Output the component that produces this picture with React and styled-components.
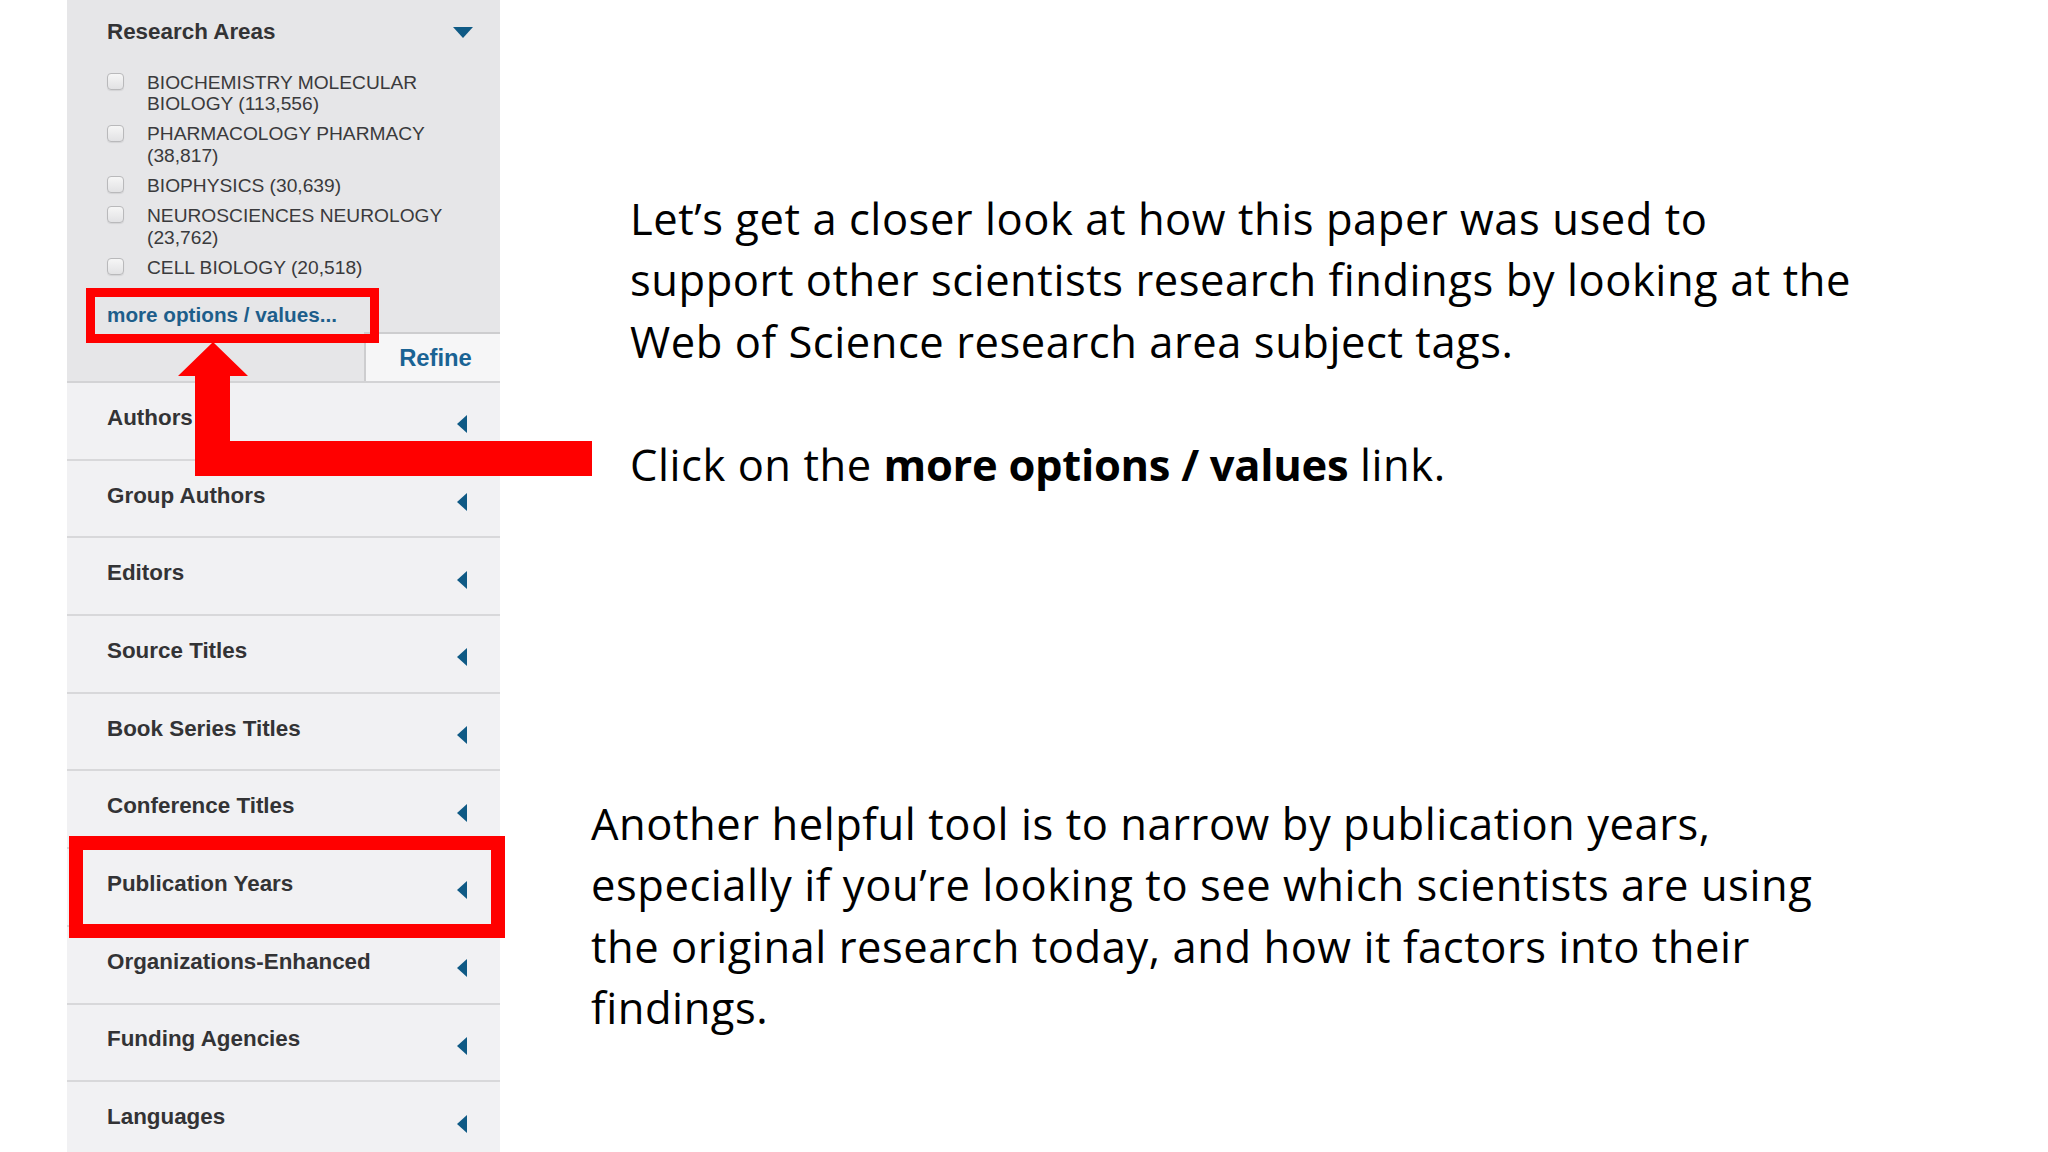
import React from "react";
import styled, { createGlobalStyle } from "styled-components";

const GlobalStyle = createGlobalStyle`
  html, body {
    margin: 0;
    padding: 0;
    background: #ffffff;
  }
  body {
    width: 2048px;
    height: 1152px;
    overflow: hidden;
    font-family: "Liberation Sans", Arial, sans-serif;
  }
`;

const Page = styled.div`
  position: relative;
  width: 2048px;
  height: 1152px;
  display: flex;
  flex-direction: row;
  background: #ffffff;
  overflow: hidden;
`;

const Sidebar = styled.aside`
  margin-left: 67px;
  width: 433px;
  height: 100%;
  display: flex;
  flex-direction: column;
  background: #f1f1f3;
  font-family: "Liberation Sans", Arial, sans-serif;
  flex-shrink: 0;
`;

const ResearchSection = styled.section`
  box-sizing: border-box;
  flex-shrink: 0;
  height: 383px;
  background: #e6e6e8;
  border-bottom: 2px solid #d3d3d5;
  padding: 19px 0 0 40px;
  display: flex;
  flex-direction: column;
`;

const SectionHeader = styled.div`
  display: flex;
  align-items: center;
  justify-content: space-between;
  padding-right: 27px;
  height: 26px;
`;

const HeaderTitle = styled.h3`
  margin: 0;
  font-size: 22.4px;
  line-height: 26px;
  font-weight: 700;
  color: #333335;
`;

const DownCaret = styled.span`
  width: 0;
  height: 0;
  border-left: 10.5px solid transparent;
  border-right: 10.5px solid transparent;
  border-top: 11px solid #0f5a85;
`;

const OptionList = styled.ul`
  list-style: none;
  margin: 26.5px 0 0 0;
  padding: 0;
  display: flex;
  flex-direction: column;
  gap: 8.3px;
`;

const OptionItem = styled.li`
  display: flex;
  align-items: flex-start;
`;

const Checkbox = styled.span`
  box-sizing: border-box;
  flex-shrink: 0;
  width: 17px;
  height: 17px;
  margin-top: 1.5px;
  border: 1px solid #b9b9bb;
  border-radius: 4px;
  background: linear-gradient(#f6f6f6, #e2e2e4);
  box-shadow: 0 1px 1px rgba(0, 0, 0, 0.08);
`;

const OptionLabel = styled.span`
  margin-left: 23px;
  max-width: 316px;
  font-size: 19.2px;
  line-height: 21.7px;
  color: #3a3a3c;
`;

const MoreLink = styled.a`
  margin-top: 24.6px;
  font-size: 20.7px;
  line-height: 24px;
  font-weight: 700;
  color: #1d5e8b;
  text-decoration: none;
  align-self: flex-start;
`;

const RefineRow = styled.div`
  margin-top: auto;
  display: flex;
  justify-content: flex-end;
`;

const RefineButton = styled.button`
  box-sizing: border-box;
  width: 136px;
  height: 49px;
  margin: 0;
  padding: 0 0 0 5px;
  border: none;
  border-top: 2px solid #cdcdcf;
  border-left: 2px solid #cdcdcf;
  background: #f6f6f7;
  font-family: "Liberation Sans", Arial, sans-serif;
  font-size: 23.8px;
  line-height: 45px;
  font-weight: 700;
  color: #1a6394;
  text-align: center;
`;

const FilterRow = styled.div`
  box-sizing: border-box;
  flex-shrink: 0;
  height: 77.7px;
  border-bottom: 2px solid #d8d8da;
  padding: 0 33px 6px 40px;
  display: flex;
  align-items: center;
  justify-content: space-between;
`;

const FilterTitle = styled.span`
  font-size: 22.4px;
  line-height: 26px;
  font-weight: 700;
  color: #333335;
`;

const LeftCaret = styled.span`
  width: 0;
  height: 0;
  margin-top: 13px;
  border-top: 9px solid transparent;
  border-bottom: 9px solid transparent;
  border-right: 10.5px solid #0f5a85;
`;

const Content = styled.main`
  flex: 1;
  display: flex;
  flex-direction: column;
  padding: 187.6px 0 0 91px;
  font-family: "Open Sans", Lato, sans-serif;
  color: #000000;
`;

const Paragraph = styled.p`
  margin: 0;
  margin-left: ${(p) => p.$indent || 0}px;
  margin-top: ${(p) => p.$top || 0}px;
  font-size: 43.5px;
  line-height: 61.6px;
  letter-spacing: 0.55px;
  white-space: nowrap;
`;

const Strong = styled.strong`
  font-weight: 700;
  letter-spacing: -0.3px;
`;

const HighlightBox = styled.div`
  position: absolute;
  box-sizing: border-box;
  left: ${(p) => p.$x}px;
  top: ${(p) => p.$y}px;
  width: ${(p) => p.$w}px;
  height: ${(p) => p.$h}px;
  border: ${(p) => p.$t}px solid #ff0000;
  pointer-events: none;
`;

const ArrowSvg = styled.svg`
  position: absolute;
  left: 170px;
  top: 336px;
  width: 430px;
  height: 145px;
  pointer-events: none;
`;

const options = [
  "BIOCHEMISTRY MOLECULAR BIOLOGY (113,556)",
  "PHARMACOLOGY PHARMACY (38,817)",
  "BIOPHYSICS (30,639)",
  "NEUROSCIENCES NEUROLOGY (23,762)",
  "CELL BIOLOGY (20,518)",
];

const filters = [
  "Authors",
  "Group Authors",
  "Editors",
  "Source Titles",
  "Book Series Titles",
  "Conference Titles",
  "Publication Years",
  "Organizations-Enhanced",
  "Funding Agencies",
  "Languages",
];

export default function App() {
  return (
    <>
      <GlobalStyle />
      <Page>
        <Sidebar>
          <ResearchSection>
            <SectionHeader>
              <HeaderTitle>Research Areas</HeaderTitle>
              <DownCaret />
            </SectionHeader>
            <OptionList>
              {options.map((o) => (
                <OptionItem key={o}>
                  <Checkbox />
                  <OptionLabel>{o}</OptionLabel>
                </OptionItem>
              ))}
            </OptionList>
            <MoreLink href="#">more options / values...</MoreLink>
            <RefineRow>
              <RefineButton>Refine</RefineButton>
            </RefineRow>
          </ResearchSection>
          {filters.map((f) => (
            <FilterRow key={f}>
              <FilterTitle>{f}</FilterTitle>
              <LeftCaret />
            </FilterRow>
          ))}
        </Sidebar>
        <Content>
          <Paragraph $indent={39}>
            Let’s get a closer look at how this paper was used to
            <br />
            support other scientists research findings by looking at the
            <br />
            Web of Science research area subject tags.
          </Paragraph>
          <Paragraph $indent={39} $top={61.6}>
            Click on the <Strong>more options / values</Strong> link.
          </Paragraph>
          <Paragraph $top={297}>
            Another helpful tool is to narrow by publication years,
            <br />
            especially if you’re looking to see which scientists are using
            <br />
            the original research today, and how it factors into their
            <br />
            findings.
          </Paragraph>
        </Content>

        <HighlightBox $x={86} $y={288} $w={293} $h={55} $t={9.5} />
        <HighlightBox $x={69} $y={836} $w={436} $h={102} $t={14} />
        <ArrowSvg viewBox="0 0 430 145">
          <polygon
            points="43,6 78,40 60,40 60,105 422,105 422,140 25,140 25,40 8,40"
            fill="#ff0000"
          />
        </ArrowSvg>
      </Page>
    </>
  );
}
